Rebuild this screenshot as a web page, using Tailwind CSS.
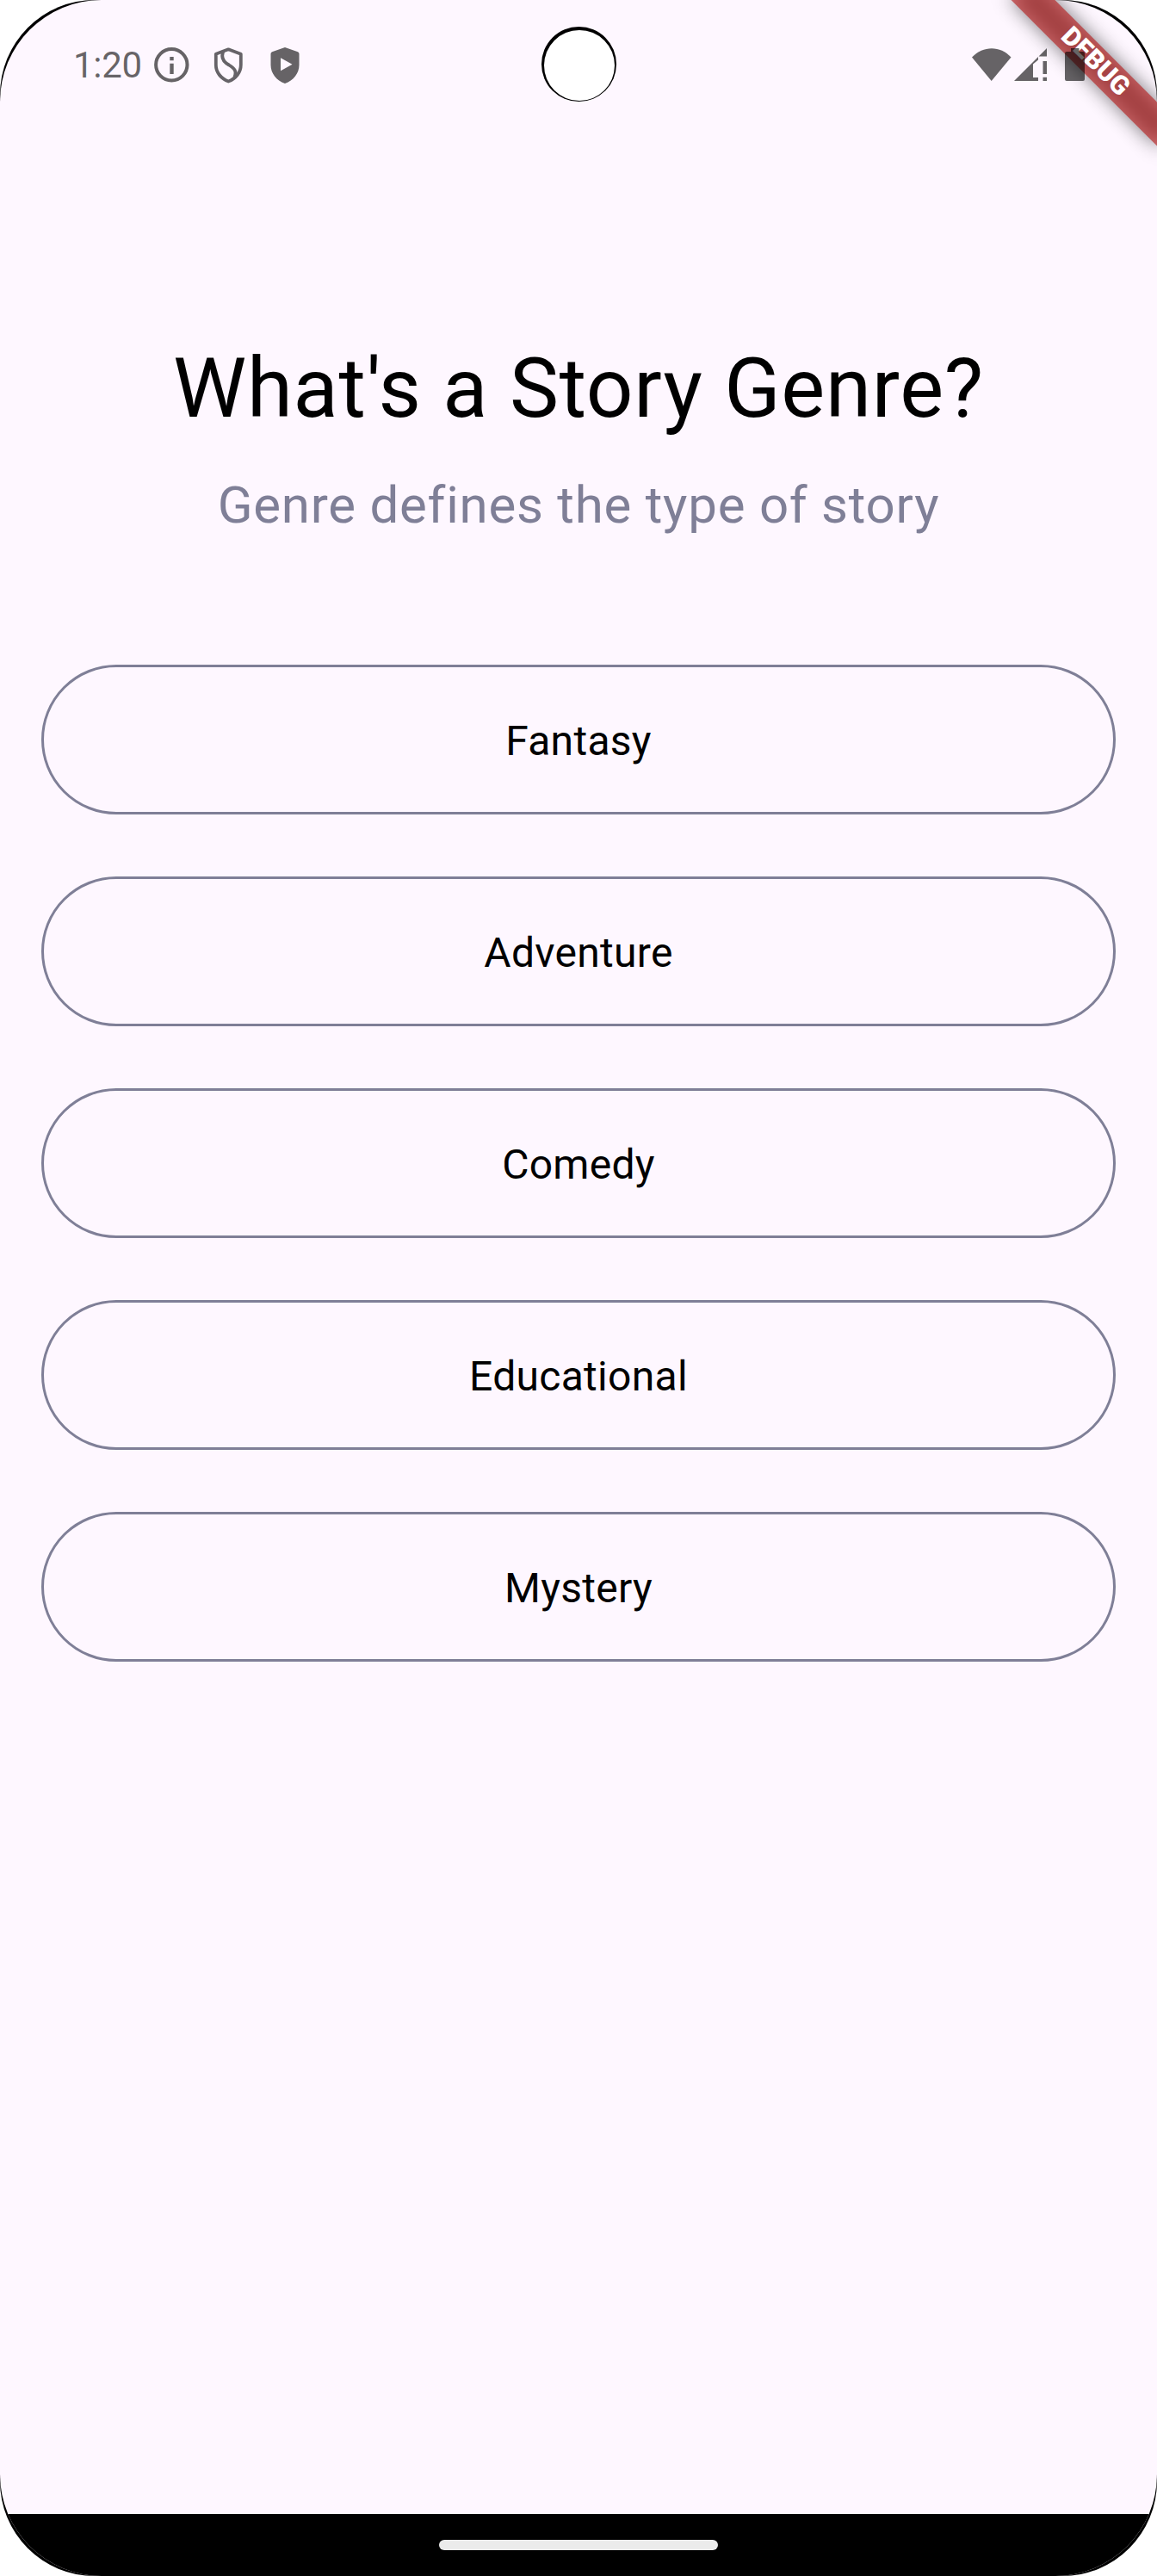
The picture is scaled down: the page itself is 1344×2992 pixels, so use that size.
<!DOCTYPE html>
<html lang="en">
<head>
<meta charset="utf-8">
<title>Story Genre</title>
<script src="https://cdn.jsdelivr.net/npm/@tailwindcss/browser@4"></script>
</head>
<body class="bg-white font-[Roboto,sans-serif]">
<div class="relative h-[2992px] w-[1344px] overflow-hidden rounded-[110px] bg-black">
  <div class="relative flex h-full flex-col overflow-hidden rounded-[118px] bg-[#fef7ff]">
    <header class="relative z-10 flex h-[151px] shrink-0 items-center pl-[85px] text-black/60">
      <span class="w-[94px] text-[42px] leading-[48px] tracking-[-0.3px]">1:20</span>
      <svg class="size-[41px]" viewBox="0 0 41 41" fill="none"><circle cx="20.3" cy="20.3" r="18.2" stroke="currentColor" stroke-width="4"/><path d="M18.3 11h4.4v4.2h-4.4zM18.3 18.7h4.4V31h-4.4z" fill="currentColor"/></svg>
      <svg class="ml-[28px] h-[42px] w-[34px] text-[#666368]" viewBox="0 0 34 42" fill="none" stroke="currentColor" stroke-width="3.8" stroke-linejoin="round"><path d="M17.300 2.3 2.8 7.8v12.4C2.8 29 8.800 36.500 17.300 39.500c8.500-3 14.500-10.500 14.500-19.300V7.800z"/><path d="M11.500 4.500C8 12 12 17 18 20.500c7 4.500 9 7 6.500 14"/></svg>
      <svg class="ml-[32px] h-[42px] w-[34px]" viewBox="0 0 34 42"><path fill="currentColor" fill-rule="evenodd" d="M17 0 2 5.300Q.5 6 .5 7.500v13C.5 30 7 38.500 17 42c10-3.500 16.500-12 16.500-21.500v-13Q33.500 6 32 5.300zM12 12.300v15l13.500-7.500z"/></svg>
      <svg class="-mt-[2px] ml-[781px] h-[38px] w-[46px]" viewBox="0 0 46 38"><path fill="currentColor" d="M0 10.500C13-3.300 33-3.300 45.500 10.500L22.700 38z"/></svg>
      <svg class="-mt-[2px] ml-[3px] h-[38px] w-[39px]" viewBox="0 0 39 38"><path fill="currentColor" d="M38 0v9.500H28.500zM28 10v3.500l-6 5V34h6v4H0zM33.500 15H38v15h-4.500zM33.500 33.700H38V38h-4.500z"/></svg>
      <svg class="-mt-[2px] ml-[20px] h-[38px] w-[24px]" viewBox="0 0 24 38"><path fill="currentColor" d="M7 0h9.500v4H21q2 0 2 2v30q0 2-2 2H2q-2 0-2-2V6q0-2 2-2h5z"/></svg>
    </header>
    <main class="flex flex-1 flex-col px-12 text-center text-black">
      <h1 class="mt-[244px] text-[96px] leading-[112px] tracking-[0.75px]">What's a Story Genre?</h1>
      <p class="mt-[45px] text-[60px] leading-[70px] tracking-[0.75px] text-[#7f7f97]">Genre defines the type of story</p>
      <div class="mt-[150px] flex flex-col gap-[72px] text-[48px] leading-[56px] tracking-[0.3px]">
        <button class="h-[174px] rounded-full border-3 border-[#7f7f97] pt-[4px]">Fantasy</button>
        <button class="h-[174px] rounded-full border-3 border-[#7f7f97] pt-[4px]">Adventure</button>
        <button class="h-[174px] rounded-full border-3 border-[#7f7f97] pt-[4px]">Comedy</button>
        <button class="h-[174px] rounded-full border-3 border-[#7f7f97] pt-[4px]">Educational</button>
        <button class="h-[174px] rounded-full border-3 border-[#7f7f97] pt-[4px]">Mystery</button>
      </div>
    </main>
    <!-- debug ribbon -->
    <div class="absolute top-[54px] left-[1152px] h-[36px] w-[240px] rotate-45">
      <div class="absolute inset-0 bg-black/50 blur-[11px]"></div>
      <div class="relative flex h-full items-center justify-center bg-[#b71c1c]/63 pb-[2px] text-[30.6px] font-black text-white">DEBUG</div>
    </div>
    <footer class="flex h-[72px] shrink-0 justify-center bg-black pt-[30px]"><div class="h-3 w-[324px] rounded-full bg-[#ebebeb]"></div></footer>
  </div>
  <!-- camera cutout -->
  <div class="absolute top-[31px] left-[629px] flex size-[87px] justify-center rounded-full bg-black pt-[4px]"><div class="size-[82px] rounded-full bg-white"></div></div>
</div>
</body>
</html>
